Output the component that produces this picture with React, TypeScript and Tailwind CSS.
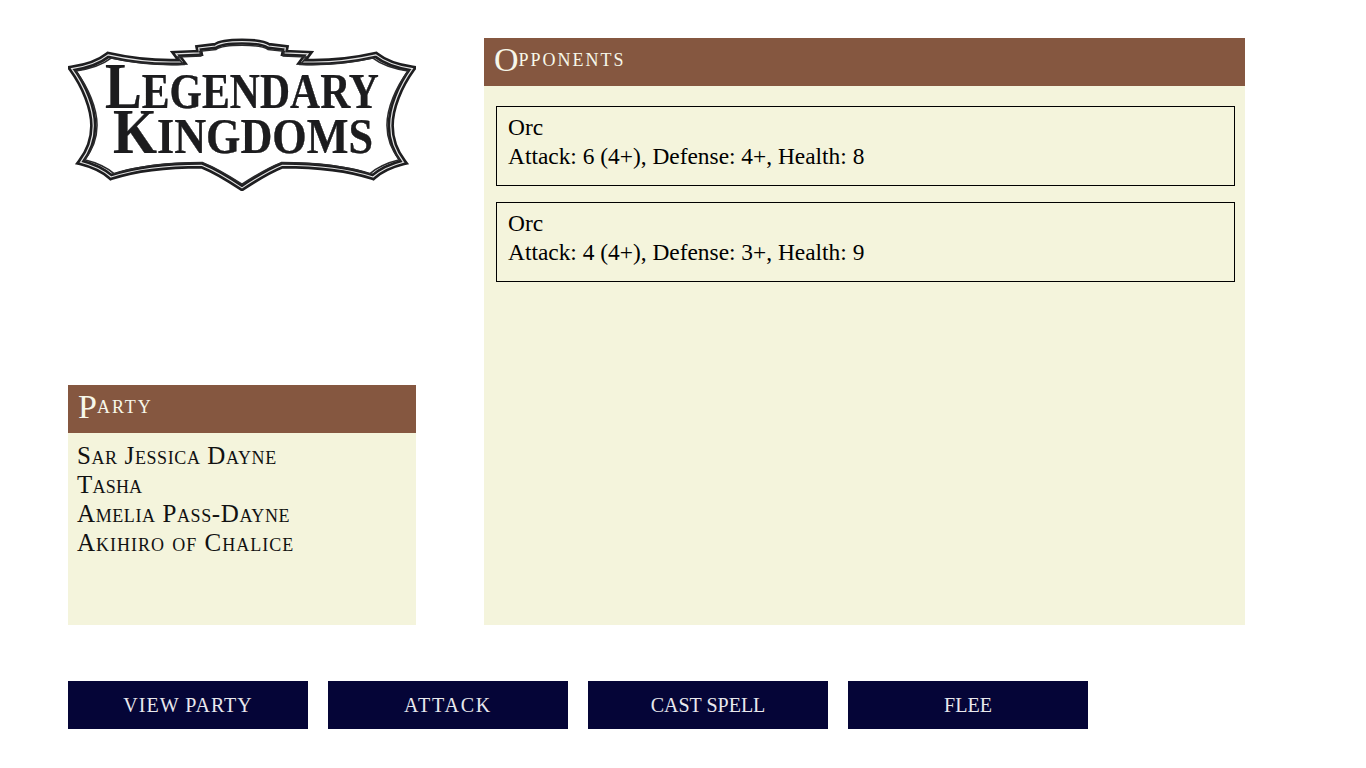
const frame = "M1 30 C14 28 28 24 38 16 C60 21 88 24 113 23 L107 15 L131 14 L130 9 L147 7 C155 1 193 1 201 7 L218 9 L217 14 L241 15 L235 23 C260 24 288 21 310 16 C320 24 334 28 347 30 C334 48 325 70 325 88 C325 104 331 116 338 125 C326 128 315 133 307 140 C280 131 250 128 215 128 C200 134 186 143 174 151 C162 143 148 134 133 128 C98 128 68 131 41 140 C33 133 22 128 10 125 C17 116 23 104 23 88 C23 70 14 48 1 30 Z";

function Logo() {
  return (
    <svg width="348" height="153" viewBox="0 0 348 153" className="block">
      <g transform="translate(174 76) scale(0.985) translate(-174 -76)">
        <path d={frame} fill="white" stroke="#1e1e20" strokeWidth="6.5" strokeLinejoin="miter" />
        <path d={frame} fill="none" stroke="#e4e4e4" strokeWidth="1.2" strokeLinejoin="miter" />
      </g>
      <g transform="translate(174 76) scale(0.96 0.935) translate(-174 -76)">
        <path d={frame} fill="none" stroke="#2a2a2c" strokeWidth="1.6" strokeLinejoin="miter" />
      </g>
      <g
        fontFamily="'Liberation Serif', serif"
        fontWeight="700"
        className="[filter:drop-shadow(0.8px_0.8px_0_white)_drop-shadow(0.8px_0.8px_0_#222222)]"
      >
        <text x="37" y="69.5" textLength="274" lengthAdjust="spacingAndGlyphs" fontSize="50" fill="#1c1c1e">
          <tspan fontSize="66">L</tspan>EGENDARY
        </text>
        <text x="45" y="114.5" textLength="260" lengthAdjust="spacingAndGlyphs" fontSize="50" fill="#1c1c1e">
          <tspan fontSize="64">K</tspan>INGDOMS
        </text>
      </g>
    </svg>
  );
}

function PanelHeader({ children }: { children: string }) {
  return (
    <div className="h-12 bg-[#855740] pl-[10px] pt-[5px] text-[25px] leading-[29px] tracking-[2px] text-[#f7f7ea] [font-variant:small-caps] first-letter:align-[-5px] first-letter:text-[34px] first-letter:tracking-normal">
      {children}
    </div>
  );
}

function Opponent({ stats }: { stats: string }) {
  return (
    <div className="h-20 border border-black px-[11px] pt-[6px] text-[23.4px] leading-[29px] text-black">
      <div>Orc</div>
      <div>{stats}</div>
    </div>
  );
}

const actions = [
  { label: "VIEW PARTY", cls: "tracking-[1px]" },
  { label: "ATTACK", cls: "tracking-[1.8px]" },
  { label: "CAST SPELL", cls: "tracking-normal" },
  { label: "FLEE", cls: "tracking-normal" },
];

const party = [
  { name: "Sar Jessica Dayne", cls: "tracking-[0.6px]" },
  { name: "Tasha", cls: "tracking-[0.2px]" },
  { name: "Amelia Pass-Dayne", cls: "tracking-[0.6px]" },
  { name: "Akihiro of Chalice", cls: "tracking-[1px]" },
];

export default function App() {
  return (
    <div className="h-[768px] bg-white pl-[68px] pt-[38px] font-['Liberation_Serif',serif]">
      <div className="flex gap-[68px]">
        <div className="flex h-[587px] w-[348px] flex-col justify-between">
          <Logo />
          <div className="h-60 bg-[#f4f4dc]">
            <PanelHeader>Party</PanelHeader>
            <div className="px-[9px] pt-2 text-[25px] leading-[29px] text-[#111111] [font-variant:small-caps]">
              {party.map((p) => (
                <div key={p.name} className={p.cls}>{p.name}</div>
              ))}
            </div>
          </div>
        </div>
        <div className="h-[587px] w-[761px] bg-[#f4f4dc]">
          <PanelHeader>Opponents</PanelHeader>
          <div className="flex flex-col gap-4 pl-3 pr-[10px] pt-5">
            <Opponent stats="Attack: 6 (4+), Defense: 4+, Health: 8" />
            <Opponent stats="Attack: 4 (4+), Defense: 3+, Health: 9" />
          </div>
        </div>
      </div>
      <div className="mt-[56px] flex gap-5">
        {actions.map((a) => (
          <button key={a.label} className={`h-12 w-60 bg-[#050537] text-[20px] text-[#e8e8ee] ${a.cls}`}>
            {a.label}
          </button>
        ))}
      </div>
    </div>
  );
}
